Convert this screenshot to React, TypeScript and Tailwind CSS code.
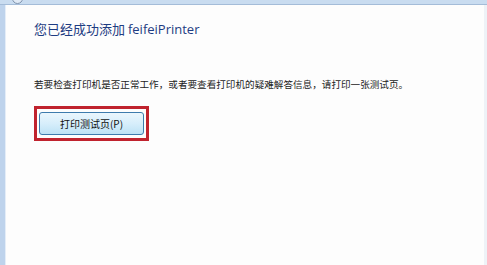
import React from "react";

const cjk = "font-['Microsoft_YaHei','Noto_Sans_CJK_SC',sans-serif]";

const App = () => {
  return (
    <div className="w-[487px] h-[265px] flex flex-col bg-[#fdfdfd] overflow-hidden font-['Noto_Sans_CJK_SC',sans-serif]">
      {/* window title strip */}
      <div className="relative h-[5px] bg-[#c9dcf0] border-b border-[#a4bcd8]">
        <div className="absolute left-[12px] top-[-7px] w-[11px] h-[11px] rounded-full border border-[#7f93ad] bg-[#dfe9f5]" />
      </div>
      <div className="flex flex-1">
        <div className="w-[6px] bg-[#bed3ec] border-r border-[#e4edf8]" />
        <div className="flex-1 flex flex-col pl-[28px] pt-[15px]">
          <h1 className={`text-[13px] leading-[18px] text-[#1e3c82] ${cjk}`}>
            您已经成功添加 <span className="font-['Open_Sans',sans-serif] text-[13px]">feifeiPrinter</span>
          </h1>
          <p className={`mt-[39px] text-[9.6px] leading-[14px] text-[#222] ${cjk}`}>
            若要检查打印机是否正常工作，或者要查看打印机的疑难解答信息，请打印一张测试页。
          </p>
          <div className="mt-[15px] w-[115px] h-[35px] border-[3px] border-[#c0232e] p-[2px] flex items-start">
            <button className="mt-[1px] w-[108px] h-[23px] rounded-[3px] border border-[#3d7bad] bg-gradient-to-b from-[#eaf6fd] via-[#d7eefb] to-[#bde2f5] text-[10px] text-[#111] flex items-center justify-center">
              打印测试页(P)
            </button>
          </div>
        </div>
        <div className="w-[3px] bg-[#eef2f7]" />
      </div>
    </div>
  );
};

export default App;
